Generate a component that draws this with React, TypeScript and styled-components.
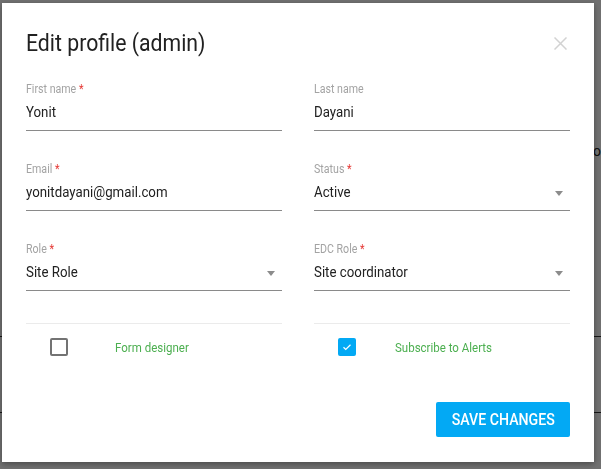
import React, { useState } from 'react';
import styled, { createGlobalStyle, css } from 'styled-components';

const GlobalStyle = createGlobalStyle`
  html, body {
    margin: 0;
    padding: 0;
    background: #ffffff;
    font-family: Roboto, "Liberation Sans", Arial, sans-serif;
    overflow: hidden;
  }
`;

// the reference text runs narrower than stock Roboto
const narrow = css`
  display: inline-block;
  transform: scaleX(0.885);
  transform-origin: left center;
  white-space: nowrap;
`;

const Page = styled.div`
  width: 601px;
  height: 469px;
  display: flex;
  flex-direction: column;
  background: #ffffff;
`;

const PageRow = styled.div<{ $height: number; $line?: boolean }>`
  height: ${(p) => p.$height}px;
  border-bottom: ${(p) => (p.$line ? '1px solid #333333' : 'none')};
  display: flex;
  align-items: center;
  justify-content: flex-end;
  font-size: 14px;
  color: #222;
`;

const Backdrop = styled.div`
  position: fixed;
  inset: 0;
  background: rgba(0, 0, 0, 0.56);
`;

const Dialog = styled.div`
  position: fixed;
  left: 2px;
  top: 3px;
  width: 592px;
  height: 459px;
  box-sizing: border-box;
  background: #ffffff;
  box-shadow: 0 2px 6px rgba(0, 0, 0, 0.35);
  padding: 24px;
  display: flex;
  flex-direction: column;
`;

const Header = styled.div`
  display: flex;
  align-items: center;
  justify-content: space-between;
  height: 32px;
`;

const Title = styled.h2`
  margin: 0;
  font-size: 24px;
  font-weight: 400;
  color: #212121;
  ${narrow};
`;

const CloseButton = styled.button`
  border: none;
  background: none;
  padding: 0;
  margin-right: 3px;
  width: 14px;
  height: 14px;
  display: flex;
  align-items: center;
  justify-content: center;
  cursor: pointer;
`;

const FieldGrid = styled.div`
  display: grid;
  grid-template-columns: 256px 256px;
  column-gap: 32px;
  row-gap: 31px;
  margin-top: 23px;
`;

const Field = styled.div`
  display: flex;
  flex-direction: column;
  height: 48px;
  border-bottom: 1px solid #8a8a8a;
`;

const Label = styled.label`
  font-size: 12px;
  color: #a3a3a3;
  line-height: 14px;
  ${narrow};
`;

const Required = styled.span`
  color: #e53935;
  margin-left: 3px;
`;

const Value = styled.div`
  margin-top: 7px;
  font-size: 15px;
  color: #212121;
  line-height: 18px;
  display: flex;
  align-items: center;
  justify-content: space-between;
`;

const ValueText = styled.span`
  ${narrow};
`;

const Caret = styled.span`
  width: 0;
  height: 0;
  border-left: 4.5px solid transparent;
  border-right: 4.5px solid transparent;
  border-top: 5px solid #8c8c8c;
  margin-right: 7px;
  margin-top: 3px;
`;

const CheckGrid = styled.div`
  display: grid;
  grid-template-columns: 256px 256px;
  column-gap: 32px;
  margin-top: 32px;
`;

const CheckCell = styled.div`
  border-top: 1px solid #ebebeb;
  padding: 14px 0 0 24px;
  display: flex;
  align-items: center;
`;

const Box = styled.span<{ $checked: boolean }>`
  width: 18px;
  height: 18px;
  box-sizing: border-box;
  border-radius: 2px;
  border: 2px solid ${(p) => (p.$checked ? '#03a9f4' : '#737373')};
  background: ${(p) => (p.$checked ? '#03a9f4' : '#ffffff')};
  display: flex;
  align-items: center;
  justify-content: center;
  cursor: pointer;
`;

const CheckLabel = styled.span<{ $gap: number }>`
  margin-left: ${(p) => p.$gap}px;
  font-size: 13px;
  color: #4caf50;
  ${narrow};
`;

const Footer = styled.div`
  margin-top: auto;
  display: flex;
  justify-content: flex-end;
`;

const SaveButton = styled.button`
  height: 35px;
  width: 134px;
  padding: 0;
  border: none;
  border-radius: 2px;
  background: #03a9f4;
  color: #ffffff;
  font-family: Roboto, "Liberation Sans", Arial, sans-serif;
  font-size: 16px;
  font-weight: 500;
  text-transform: uppercase;
  cursor: pointer;
  margin-bottom: 1px;
  display: flex;
  align-items: center;
  justify-content: center;
`;

const ButtonText = styled.span`
  ${narrow};
  transform-origin: center center;
`;

type FieldProps = {
  label: string;
  value: string;
  required?: boolean;
  select?: boolean;
};

const FormField: React.FC<FieldProps> = ({ label, value, required, select }) => (
  <Field>
    <Label>
      {label}
      {required && <Required>*</Required>}
    </Label>
    <Value>
      <ValueText>{value}</ValueText>
      {select && <Caret />}
    </Value>
  </Field>
);

const Checkbox: React.FC<{ checked: boolean; onToggle: () => void }> = ({ checked, onToggle }) => (
  <Box $checked={checked} onClick={onToggle}>
    {checked && (
      <svg width="12" height="12" viewBox="0 0 24 24">
        <path d="M5 12.5l4.5 4.5L19 7.5" fill="none" stroke="#fff" strokeWidth="2.4" />
      </svg>
    )}
  </Box>
);

export default function App() {
  const [formDesigner, setFormDesigner] = useState(false);
  const [alerts, setAlerts] = useState(true);

  return (
    <>
      <GlobalStyle />
      <Page>
        <PageRow $height={137} />
        <PageRow $height={28}>Go</PageRow>
        <PageRow $height={171} $line />
        <PageRow $height={75} $line />
      </Page>
      <Backdrop />
      <Dialog>
        <Header>
          <Title>Edit profile (admin)</Title>
          <CloseButton aria-label="Close">
            <svg width="13" height="13" viewBox="0 0 13 13">
              <path d="M0.5 0.5L12.5 12.5M12.5 0.5L0.5 12.5" stroke="#d2d2d2" strokeWidth="1.5" />
            </svg>
          </CloseButton>
        </Header>
        <FieldGrid>
          <FormField label="First name" value="Yonit" required />
          <FormField label="Last name" value="Dayani" />
          <FormField label="Email" value="yonitdayani@gmail.com" required />
          <FormField label="Status" value="Active" required select />
          <FormField label="Role" value="Site Role" required select />
          <FormField label="EDC Role" value="Site coordinator" required select />
        </FieldGrid>
        <CheckGrid>
          <CheckCell>
            <Checkbox checked={formDesigner} onToggle={() => setFormDesigner((v) => !v)} />
            <CheckLabel $gap={47}>Form designer</CheckLabel>
          </CheckCell>
          <CheckCell>
            <Checkbox checked={alerts} onToggle={() => setAlerts((v) => !v)} />
            <CheckLabel $gap={39}>Subscribe to Alerts</CheckLabel>
          </CheckCell>
        </CheckGrid>
        <Footer>
          <SaveButton>
            <ButtonText>Save changes</ButtonText>
          </SaveButton>
        </Footer>
      </Dialog>
    </>
  );
}
